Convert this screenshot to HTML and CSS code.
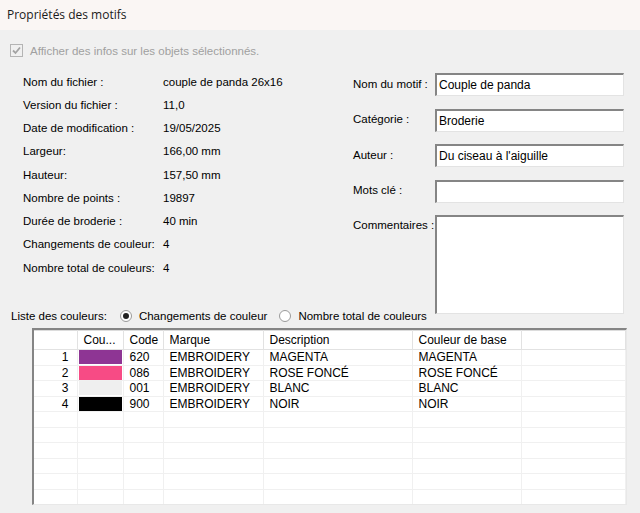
FILE: index.html
```html
<!DOCTYPE html>
<html lang="fr">
<head>
  <meta charset="UTF-8" />
  <title>Propriétés des motifs</title>
  <link rel="stylesheet" href="styles.css">
</head>
<body>
  <div class="titlebar">Propriétés des motifs</div>

  <div class="dialog">
    <label class="check disabled">
      <span class="checkbox">
        <svg width="9" height="9" viewBox="0 0 9 9"><path d="M1 4.5 L3.5 7 L8 1.5" fill="none" stroke="#a3a3a3" stroke-width="1.8"/></svg>
      </span>
      Afficher des infos sur les objets sélectionnés.
    </label>

    <div class="info">
      <!-- File information (read only) -->
      <div class="facts">
        <div class="fact"><span class="key">Nom du fichier :</span><span>couple de panda 26x16</span></div>
        <div class="fact"><span class="key">Version du fichier :</span><span>11,0</span></div>
        <div class="fact"><span class="key">Date de modification :</span><span>19/05/2025</span></div>
        <div class="fact"><span class="key">Largeur:</span><span>166,00 mm</span></div>
        <div class="fact"><span class="key">Hauteur:</span><span>157,50 mm</span></div>
        <div class="fact"><span class="key">Nombre de points :</span><span>19897</span></div>
        <div class="fact"><span class="key">Durée de broderie :</span><span>40 min</span></div>
        <div class="fact"><span class="key">Changements de couleur:</span><span>4</span></div>
        <div class="fact"><span class="key">Nombre total de couleurs:</span><span>4</span></div>
      </div>

      <!-- Editable pattern fields -->
      <div class="fields">
        <span class="field-label">Nom du motif :</span>
        <div class="edit">Couple de panda</div>
        <span class="field-label">Catégorie :</span>
        <div class="edit">Broderie</div>
        <span class="field-label">Auteur :</span>
        <div class="edit">Du ciseau à l'aiguille</div>
        <span class="field-label">Mots clé :</span>
        <div class="edit"></div>
        <span class="field-label top">Commentaires :</span>
        <div class="edit memo"></div>
      </div>
    </div>

    <div class="list-mode">
      <span>Liste des couleurs:</span>
      <span class="radio checked first"></span><span>Changements de couleur</span>
      <span class="radio"></span><span>Nombre total de couleurs</span>
    </div>

    <div class="grid">
      <table>
        <colgroup>
          <col style="width:43px"><col style="width:46px"><col style="width:40px">
          <col style="width:100px"><col style="width:149px"><col style="width:109px"><col>
        </colgroup>
        <thead>
          <tr><th></th><th>Cou...</th><th>Code</th><th>Marque</th><th>Description</th><th>Couleur de base</th><th></th></tr>
        </thead>
        <tbody>
          <tr><td class="num">1</td><td class="swatch"><span class="magenta"></span></td><td>620</td><td>EMBROIDERY</td><td>MAGENTA</td><td>MAGENTA</td><td></td></tr>
          <tr><td class="num">2</td><td class="swatch"><span class="pink"></span></td><td>086</td><td>EMBROIDERY</td><td>ROSE FONCÉ</td><td>ROSE FONCÉ</td><td></td></tr>
          <tr><td class="num">3</td><td class="swatch"><span class="white"></span></td><td>001</td><td>EMBROIDERY</td><td>BLANC</td><td>BLANC</td><td></td></tr>
          <tr><td class="num">4</td><td class="swatch"><span class="black"></span></td><td>900</td><td>EMBROIDERY</td><td>NOIR</td><td>NOIR</td><td></td></tr>
          <tr><td></td><td></td><td></td><td></td><td></td><td></td><td></td></tr>
          <tr><td></td><td></td><td></td><td></td><td></td><td></td><td></td></tr>
          <tr><td></td><td></td><td></td><td></td><td></td><td></td><td></td></tr>
          <tr><td></td><td></td><td></td><td></td><td></td><td></td><td></td></tr>
          <tr><td></td><td></td><td></td><td></td><td></td><td></td><td></td></tr>
          <tr><td></td><td></td><td></td><td></td><td></td><td></td><td></td></tr>
        </tbody>
      </table>
    </div>
  </div>
</body>
</html>
```

FILE: styles.css
```css
/* Global styles */
body {
  margin: 0;
  background: #f0f0f0;
  font-family: "Liberation Sans", Arial, sans-serif;
  font-size: 11.5px;
  color: #000;
}

.titlebar {
  height: 30px;
  line-height: 29px;
  padding-left: 7px;
  background: #faf6f4;
  font-family: "Open Sans", "Noto Sans", sans-serif;
  font-size: 12px;
  color: #1a1a1a;
}

.dialog {
  padding: 14px 0 0 10px;
}

/* Disabled checkbox line */
.check {
  display: flex;
  align-items: center;
  gap: 7px;
  height: 13px;
}
.check.disabled {
  color: #a0a0a0;
}
.checkbox {
  width: 11px;
  height: 11px;
  border: 1px solid #b4b4b4;
  background: #f0f0f0;
  display: flex;
  align-items: center;
  justify-content: center;
}

.info {
  display: flex;
  margin-top: 13px;
}

/* Left column: read only facts */
.facts {
  width: 330px;
  padding-left: 13px;
}
.fact {
  display: flex;
  height: 23.25px;
  align-items: center;
}
.fact .key {
  width: 140px;
}

/* Right column: editable fields */
.fields {
  display: grid;
  grid-template-columns: 82px 189px;
  row-gap: 12.5px;
  padding-top: 3px;
}
.field-label {
  align-self: center;
  margin-top: -2px;
}
.field-label.top {
  align-self: start;
  margin-top: 0;
  padding-top: 4px;
}
.edit {
  box-sizing: border-box;
  height: 23px;
  padding: 3px 0 0 2px;
  background: #fff;
  border-style: solid;
  border-width: 2px 1px 1px 2px;
  border-color: #858585 #e3e3e3 #e3e3e3 #858585;
  font-size: 12px;
}
.edit.memo {
  height: 99px;
}

/* Colour list mode radios */
.list-mode {
  display: flex;
  align-items: center;
  height: 14px;
  margin-top: -5px;
  padding-left: 1px;
}
.radio {
  box-sizing: border-box;
  width: 12px;
  height: 12px;
  margin: 0 7px 0 12px;
  border-radius: 50%;
  border: 1px solid #9a9a9a;
  background: #fff;
  position: relative;
}
.radio.first {
  margin-left: 13px;
}
.radio.checked::after {
  content: "";
  position: absolute;
  left: 2px;
  top: 2px;
  width: 6px;
  height: 6px;
  border-radius: 50%;
  background: #222;
}

/* Colour grid */
.grid {
  box-sizing: border-box;
  width: 595px;
  height: 177px;
  margin: 5px 0 0 22px;
  background: #fff;
  border-style: solid;
  border-width: 2px 1px 1px 2px;
  border-color: #858585 #e8e8e8 #e8e8e8 #858585;
  overflow: hidden;
}
.grid table {
  width: 100%;
  border-collapse: collapse;
  table-layout: fixed;
  font-size: 12px;
}
.grid th {
  height: 18px;
  padding: 0 0 0 6px;
  text-align: left;
  font-weight: normal;
  background: #fff;
  border-right: 1px solid #e2e2e2;
  border-bottom: 1px solid #e2e2e2;
  border-top: 1px solid #dcdcdc;
  white-space: nowrap;
  overflow: hidden;
}
.grid td {
  height: 14.5px;
  padding: 0 0 0 6px;
  line-height: 14px;
  border-right: 1px solid #f0f0f0;
  border-bottom: 1px solid #f0f0f0;
  white-space: nowrap;
}
.grid td.num {
  text-align: right;
  padding: 0 8px 0 0;
}
.grid td.swatch {
  padding: 0 1px;
}
.swatch span {
  display: block;
  height: 14px;
}
.magenta { background: #8e3594; }
.pink { background: #f74b85; }
.white { background: #efefef; }
.black { background: #000; }
```
